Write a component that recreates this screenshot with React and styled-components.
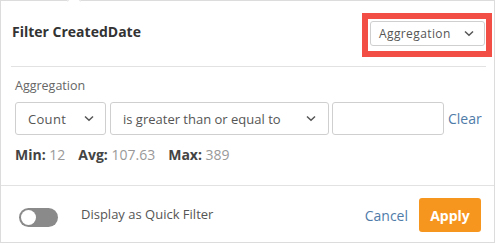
import React from "react";
import styled, { createGlobalStyle } from "styled-components";

const GlobalStyle = createGlobalStyle`
  body {
    margin: 0;
    background: #fff;
    font-family: "Open Sans", "Liberation Sans", sans-serif;
  }
`;

const Panel = styled.div`
  position: relative;
  width: 493px;
  height: 241px;
  border: 1px solid #dcdcdc;
  background: #fff;
  display: flex;
  flex-direction: column;
`;

const Notch = styled.div`
  position: absolute;
  top: -5px;
  left: 68px;
  width: 9px;
  height: 9px;
  background: #fff;
  border-left: 1px solid #e4e4e4;
  border-top: 1px solid #e4e4e4;
  transform: rotate(45deg);
`;

const Header = styled.div`
  height: 65px;
  margin: 0 8px 0 10px;
  border-bottom: 1px solid #e2e2e2;
  display: flex;
  align-items: center;
  justify-content: space-between;
`;

const Title = styled.h2`
  margin: 0 0 4px 1px;
  font-size: 14px;
  font-weight: 700;
  color: #333;
`;

const Highlight = styled.div`
  position: relative;
  display: flex;
  margin-right: 1px;
  &::after {
    content: "";
    position: absolute;
    left: -8px;
    right: -7px;
    top: -8px;
    bottom: -11px;
    border: 6px solid #f34e45;
    pointer-events: none;
  }
`;

const Select = styled.div`
  box-sizing: border-box;
  width: ${({ w }) => w}px;
  height: ${({ h }) => h}px;
  border: 1px solid #cfcfcf;
  border-radius: 3px;
  display: flex;
  align-items: center;
  justify-content: space-between;
  padding: 0 ${({ pr }) => pr}px 0 ${({ pl }) => pl}px;
  font-size: ${({ fs }) => fs}px;
  color: #555;
  background: #fff;
  letter-spacing: ${({ ls }) => ls || 0}px;
`;

const Body = styled.div`
  height: 118px;
  padding: 0 0 0 14px;
  border-bottom: 1px solid #e2e2e2;
  display: flex;
  flex-direction: column;
`;

const Label = styled.div`
  margin-top: 10px;
  font-size: 12.5px;
  color: #666;
  line-height: 17px;
`;

const Row = styled.div`
  margin-top: 8px;
  display: flex;
  align-items: center;
  gap: 4px;
`;

const Input = styled.div`
  box-sizing: border-box;
  width: 112px;
  height: 33px;
  border: 1px solid #cfcfcf;
  border-radius: 3px;
  margin-left: -1px;
`;

const LinkText = styled.span`
  font-size: ${({ fs }) => fs || 13}px;
  color: #4f7ba9;
`;

const Stats = styled.div`
  margin-top: 11px;
  display: flex;
  gap: 13px;
  font-size: 14px;
  line-height: 18px;
`;

const Stat = styled.span`
  color: #999;
  b {
    color: #444;
    font-weight: 700;
  }
`;

const Footer = styled.div`
  flex: 1;
  display: flex;
  align-items: center;
  padding: 0 13px 0 18px;
`;

const Toggle = styled.div`
  width: 39px;
  height: 19px;
  margin-top: 6px;
  border-radius: 10px;
  background: #8a8a8a;
  position: relative;
  &::before {
    content: "";
    position: absolute;
    left: 2px;
    top: 2px;
    width: 15px;
    height: 15px;
    border-radius: 50%;
    background: #fff;
  }
`;

const ToggleLabel = styled.span`
  margin-left: 23px;
  font-size: 13px;
  color: #555;
`;

const Actions = styled.div`
  margin-left: auto;
  margin-top: 2px;
  display: flex;
  align-items: center;
  gap: 11px;
`;

const ApplyButton = styled.button`
  width: 62px;
  height: 34px;
  border: none;
  border-radius: 3px;
  background: #f7961f;
  color: #fff;
  font-family: inherit;
  font-size: 14px;
  font-weight: 700;
  padding: 0;
`;

const Chevron = () => (
  <svg width="10" height="7" viewBox="0 0 10 7">
    <path d="M1 1.5 L5 5.2 L9 1.5" fill="none" stroke="#555" strokeWidth="1.5" />
  </svg>
);

export default function App() {
  return (
    <>
      <GlobalStyle />
      <Panel>
        <Notch />
        <Header>
          <Title>Filter CreatedDate</Title>
          <Highlight>
            <Select w={115} h={25} pl={8} pr={10} fs={12} ls={0.4}>
              Aggregation <Chevron />
            </Select>
          </Highlight>
        </Header>
        <Body>
          <Label>Aggregation</Label>
          <Row>
            <Select w={91} h={33} pl={12} pr={11} fs={13} ls={0.3}>
              Count <Chevron />
            </Select>
            <Select w={219} h={33} pl={12} pr={12} fs={13}>
              is greater than or equal to <Chevron />
            </Select>
            <Input />
            <LinkText fs={14}>Clear</LinkText>
          </Row>
          <Stats>
            <Stat><b>Min:</b> 12</Stat>
            <Stat><b>Avg:</b> 107.63</Stat>
            <Stat><b>Max:</b> 389</Stat>
          </Stats>
        </Body>
        <Footer>
          <Toggle />
          <ToggleLabel>Display as Quick Filter</ToggleLabel>
          <Actions>
            <LinkText fs={14}>Cancel</LinkText>
            <ApplyButton>Apply</ApplyButton>
          </Actions>
        </Footer>
      </Panel>
    </>
  );
}
